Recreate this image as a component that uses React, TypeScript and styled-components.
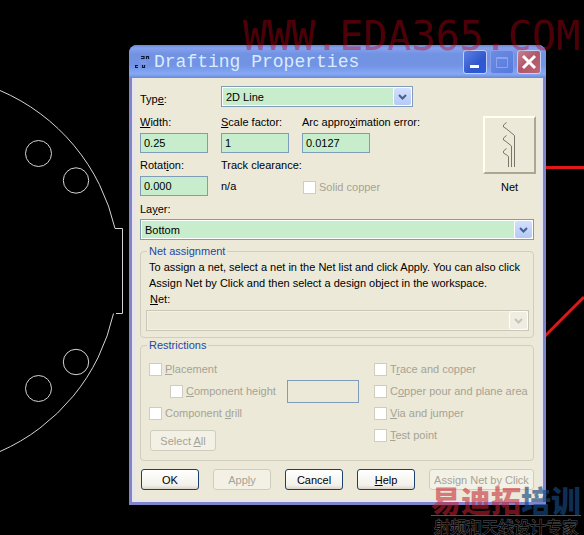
import React, { useId } from "react";
import styled, { createGlobalStyle, css } from "styled-components";

const GlobalStyle = createGlobalStyle`
  *, *::before, *::after { box-sizing: border-box; }
  body { margin: 0; background: #000; }
  body, button, input, select {
    font-family: "Liberation Sans", Arial, sans-serif;
    font-size: 11px;
    line-height: 16px;
    color: #000;
  }
`;

const INK = "#a5a395";
const FIELD = "#c7edcc";
const EDGE = "#7f9db9";

const Workspace = styled.main`
  position: relative;
  min-height: 100vh;
  padding: 45px 38px 31px 129px;
  background: #000;
  overflow: hidden;
`;

const Board = styled.svg`
  position: absolute;
  top: 0;
  left: 0;
`;

const Traces = styled.svg`
  position: absolute;
  top: 0;
  right: 0;
`;

const Dialog = styled.section`
  position: relative;
  border: 3px solid #8085cb;
  border-top: 0;
  border-radius: 8px 8px 0 0;
  background: #8085cb;
`;

const TitleBar = styled.header`
  display: flex;
  align-items: center;
  gap: 3px;
  height: 33px;
  margin: 0 -3px;
  padding: 1px 5px 0 6px;
  border-radius: 8px 8px 0 0;
  background: linear-gradient(#6c84d8 0, #86a2ef 3px, #7292e2 9px, #7292e4 20px, #84a9f5 29px, #6b87d6 33px);
`;

const Title = styled.h1`
  flex: 1;
  margin: 0;
  font: 400 18px/32px "Liberation Mono", monospace;
  color: #d8ecff;
  white-space: nowrap;
`;

const CaptionButton = styled.button<{ $tone: "blue" | "dim" | "red" }>`
  display: grid;
  place-items: center;
  width: 24px;
  height: 24px;
  padding: 0;
  border: 1px solid ${(p) => (p.$tone === "dim" ? "#86a0ea" : "#c3cff6")};
  border-radius: 3px;
  background: ${(p) =>
    ({
      blue: "linear-gradient(135deg, #5c80e4, #2f58cc 60%, #2b58dc)",
      dim: "linear-gradient(135deg, #6d8be2, #567adc)",
      red: "linear-gradient(135deg, #c6808f, #b0566a 50%, #bd6677)",
    })[p.$tone]};
`;

const Body = styled.form`
  border: 3px solid #e7e5ea;
  border-top: 0;
  padding: 8px 4px 9px 5px;
  background: #ece9d8;
`;

const Top = styled.div`
  display: flex;
  justify-content: space-between;
`;

const Fields = styled.div`
  display: grid;
  grid-template-columns: repeat(3, 68px);
  column-gap: 13px;
  row-gap: 4px;
`;

const TypeRow = styled.div`
  grid-column: 1 / -1;
  display: grid;
  grid-template-columns: 68px 192px;
  column-gap: 13px;
  align-items: end;
  margin-bottom: 3px;
`;

const Field = styled.div`
  display: flex;
  flex-direction: column;
  gap: 3px;
`;

const Label = styled.label`
  white-space: nowrap;
`;

const TextBox = styled.input`
  width: 100%;
  height: 20px;
  padding: 0 4px 0 3px;
  border: 1px solid ${EDGE};
  border-radius: 0;
  background: ${FIELD};
  &:disabled { background: #ece9d8; }
`;

const HeightBox = styled(TextBox)`
  width: 72px;
  height: 23px;
  margin-left: 11px;
`;

const Output = styled.output`
  line-height: 20px;
`;

const SelectFrame = styled.div`
  position: relative;
  display: flex;
`;

const SelectBox = styled.select`
  appearance: none;
  width: 100%;
  height: 21px;
  padding: 0 20px 0 4px;
  border: 1px solid ${EDGE};
  border-radius: 0;
  outline: 0;
  background: ${FIELD};
  box-shadow: inset 0 0 0 1px #fff;
  opacity: 1;
  &:disabled {
    border-color: #c9c7ba;
    background: #ece9d8;
    box-shadow: inset 0 0 0 1px #f3f1e6;
  }
`;

const Arrow = styled.span<{ $off?: boolean }>`
  position: absolute;
  top: 1px;
  right: 1px;
  display: grid;
  place-items: center;
  width: 19px;
  height: 19px;
  border: 1px solid #fff;
  border-radius: 3px;
  background: ${(p) => (p.$off ? "#efede2" : "linear-gradient(#d3e0fd, #b4c9f6)")};
  color: ${(p) => (p.$off ? "#c6c4b8" : "#42608f")};
  pointer-events: none;
`;

const NetTool = styled.div`
  display: flex;
  flex-direction: column;
  align-items: center;
  gap: 5px;
  padding-top: 30px;
`;

const NetButton = styled.button`
  display: grid;
  place-items: center;
  width: 53px;
  height: 58px;
  padding: 0;
  border: 2px solid;
  border-color: #fffff4 #aaa794 #aaa794 #fffff4;
  background: #ece9d8;
`;

const Main = styled.div`
  padding-right: 2px;
`;

const LayerField = styled(Field)`
  gap: 2px;
  margin-top: 5px;
`;

const Group = styled.fieldset<{ $first?: boolean }>`
  min-width: 0;
  margin: ${(p) => (p.$first ? "4px" : "0")} 0 0;
  padding: ${(p) => (p.$first ? "1px 4px 6px 5px" : "6px 4px 9px 8px")};
  border: 1px solid #d0cebf;
  border-radius: 4px;
`;

const Legend = styled.legend<{ $inset?: boolean }>`
  margin-left: ${(p) => (p.$inset ? "1px" : "-2px")};
  padding: 0 2px;
  line-height: 14px;
  color: #1d47a5;
`;

const Note = styled.p`
  margin: 0 3px;
`;

const NetLabel = styled(Label)`
  display: block;
  margin: 0 4px 3px;
`;

const Restrictions = styled.div`
  display: grid;
  grid-template-columns: 225px 1fr;
`;

const Stack = styled.div`
  display: flex;
  flex-direction: column;
  align-items: flex-start;
`;

const CheckRow = styled.div<{ $indent?: boolean }>`
  display: flex;
  align-items: center;
  height: 22px;
  padding-left: ${(p) => (p.$indent ? "21px" : "0")};
`;

const CheckLabel = styled.label`
  display: flex;
  align-items: center;
  gap: 3px;
  color: ${INK};
  white-space: nowrap;
`;

const Check = styled.input`
  appearance: none;
  flex: none;
  width: 13px;
  height: 13px;
  margin: 0;
  border: 1px solid #cfcdbf;
  background: #fff;
`;

const SolidCell = styled.div`
  display: flex;
  align-items: flex-end;
  padding-left: 1px;
  padding-bottom: 1px;
`;

const buttonOff = css`
  border-color: #cfcdbe;
  background: #f3f1e6;
  color: ${INK};
`;

const PushButton = styled.button<{ $wide?: boolean }>`
  flex: ${(p) => (p.$wide ? "1" : "0 0 58px")};
  height: 21px;
  padding: 0;
  border: 1px solid #1c3f6e;
  border-radius: 3px;
  background: linear-gradient(#fff, #f2f1ea 80%, #d9d5c9);
  white-space: nowrap;
  &:disabled { ${buttonOff} }
`;

const SelectAll = styled(PushButton)`
  flex: none;
  width: 66px;
  margin: 6px 0 0 1px;
`;

const Actions = styled.footer`
  display: flex;
  gap: 14px;
  margin-top: 8px;
  padding-left: 1px;
`;

const SiteMark = styled.div`
  position: absolute;
  top: 12px;
  right: 4px;
  font: 40px/48px "DejaVu Sans Mono", monospace;
  color: rgba(190, 0, 22, 0.42);
  white-space: nowrap;
  pointer-events: none;
`;

const Brand = styled.div`
  position: absolute;
  right: 3px;
  bottom: 0;
  display: flex;
  flex-direction: column;
  align-items: center;
  font-family: "Noto Sans CJK SC", sans-serif;
  pointer-events: none;
`;

const BrandName = styled.div`
  font-size: 30px;
  font-weight: 900;
  line-height: 32px;
  color: rgba(196, 34, 48, 0.58);
  border-bottom: 1px solid #55555a;
`;

const BrandBlue = styled.span`
  color: rgba(22, 72, 128, 0.66);
`;

const BrandLine = styled.div`
  font-size: 16px;
  line-height: 20px;
  color: #000;
  -webkit-text-stroke: 1px #58585a;
  paint-order: stroke;
`;

/** Renders a caption in which the letter after "&" is the underlined access key. */
function Caption({ text }: { text: string }) {
  const at = text.indexOf("&");
  if (at < 0) return <span>{text}</span>;
  return (
    <span>
      {text.slice(0, at)}
      <u>{text[at + 1]}</u>
      {text.slice(at + 2)}
    </span>
  );
}

function LabeledText({ text, value }: { text: string; value: string }) {
  const id = useId();
  return (
    <Field>
      <Label htmlFor={id}><Caption text={text} /></Label>
      <TextBox id={id} defaultValue={value} />
    </Field>
  );
}

function Dropdown({ id, value, disabled }: { id: string; value: string; disabled?: boolean }) {
  return (
    <SelectFrame>
      <SelectBox id={id} disabled={disabled}>
        <option>{value}</option>
      </SelectBox>
      <Arrow $off={disabled}>
        <svg width="9" height="6" viewBox="0 0 9 6" fill="none" stroke="currentColor" strokeWidth="2">
          <path d="M1 1l3.500 3.500L8 1" />
        </svg>
      </Arrow>
    </SelectFrame>
  );
}

function CheckItem({ text }: { text: string }) {
  return (
    <CheckLabel>
      <Check type="checkbox" disabled />
      <Caption text={text} />
    </CheckLabel>
  );
}

export default function App() {
  return (
    <>
      <GlobalStyle />
      <Workspace>
        <Board width="129" height="535" fill="none" stroke="#d4d4d4">
          <path d="M0 90.500A197.500 197.500 0 0 1 115 228.500H122.500V313.500H116M113.500 313.500A197.500 197.500 0 0 1 0 451.500" />
          <circle cx="38.500" cy="153.500" r="13" />
          <circle cx="76" cy="180.500" r="12.700" />
          <circle cx="76" cy="362" r="12.700" />
          <circle cx="38.500" cy="388.500" r="13" />
        </Board>
        <Traces width="39" height="535" stroke="#e01818" strokeWidth="3">
          <path d="M0 167.500H39M0 336L39 297" />
        </Traces>

        <Dialog role="dialog" aria-labelledby="title">
          <TitleBar>
            <svg width="16" height="16" viewBox="0 0 16 16" fill="none" stroke="#10183c">
              <path d="M6 2.500h3v2H6M11.500 5V2.500h2V5M3 11.500H.500v2H3M7.500 11v2.500h2V11" strokeWidth="1.200" />
              <path d="M4 7.500h7M6 9.500h6" stroke="#58b0f4" />
            </svg>
            <Title id="title">Drafting Properties</Title>
            <CaptionButton $tone="blue" type="button" aria-label="Minimize">
              <svg width="18" height="18"><path d="M4 12h9v3H4z" fill="#fff" /></svg>
            </CaptionButton>
            <CaptionButton $tone="dim" type="button" aria-label="Maximize" disabled>
              <svg width="18" height="18" fill="none" stroke="#89a4f0">
                <path d="M3.500 4.500h11v10h-11zM3.500 5.500h11" />
              </svg>
            </CaptionButton>
            <CaptionButton $tone="red" type="button" aria-label="Close">
              <svg width="18" height="18" stroke="#fff" strokeWidth="3"><path d="M3 3l12 12M15 3L3 15" /></svg>
            </CaptionButton>
          </TitleBar>

          <Body onSubmit={(e) => e.preventDefault()}>
            <Top>
              <Fields>
                <TypeRow>
                  <Label htmlFor="type"><Caption text="Typ&e:" /></Label>
                  <Dropdown id="type" value="2D Line" />
                </TypeRow>
                <LabeledText text="&Width:" value="0.25" />
                <LabeledText text="&Scale factor:" value="1" />
                <LabeledText text="Arc appro&ximation error:" value="0.0127" />
                <LabeledText text="Rotat&ion:" value="0.000" />
                <Field>
                  <Label htmlFor="clearance">Track clearance:</Label>
                  <Output id="clearance">n/a</Output>
                </Field>
                <SolidCell><CheckItem text="Solid copper" /></SolidCell>
              </Fields>
              <NetTool>
                <NetButton id="net-tool" type="button" aria-labelledby="net-name">
                  <svg width="20" height="48" viewBox="0 0 20 48" fill="none" stroke="#77756c">
                    <path d="M6.500 1.500L3.500 4v2l2.500 1.500L14.500 14.500V46M6.500 14.500L3.500 17v2l2.500 1.500L11.500 25V46M6.500 27.500L3.500 30v2l2.500 1.500L8.500 35.500V46" />
                  </svg>
                </NetButton>
                <Label id="net-name" htmlFor="net-tool">Net</Label>
              </NetTool>
            </Top>

            <Main>
              <LayerField>
                <Label htmlFor="layer"><Caption text="La&yer:" /></Label>
                <Dropdown id="layer" value="Bottom" />
              </LayerField>

              <Group $first>
                <Legend $inset>Net assignment</Legend>
                <Note>
                  To assign a net, select a net in the Net list and click Apply. You can also click
                  Assign Net by Click and then select a design object in the workspace.
                </Note>
                <NetLabel htmlFor="net"><Caption text="&Net:" /></NetLabel>
                <Dropdown id="net" value="" disabled />
              </Group>

              <Group>
                <Legend>Restrictions</Legend>
                <Restrictions>
                  <Stack>
                    <CheckRow><CheckItem text="&Placement" /></CheckRow>
                    <CheckRow $indent>
                      <CheckItem text="&Component height" />
                      <HeightBox disabled aria-label="Component height value" />
                    </CheckRow>
                    <CheckRow><CheckItem text="Component &drill" /></CheckRow>
                    <SelectAll type="button" disabled><Caption text="Select &All" /></SelectAll>
                  </Stack>
                  <Stack>
                    <CheckRow><CheckItem text="T&race and copper" /></CheckRow>
                    <CheckRow><CheckItem text="C&opper pour and plane area" /></CheckRow>
                    <CheckRow><CheckItem text="&Via and jumper" /></CheckRow>
                    <CheckRow><CheckItem text="&Test point" /></CheckRow>
                  </Stack>
                </Restrictions>
              </Group>

              <Actions>
                <PushButton type="submit">OK</PushButton>
                <PushButton type="button" disabled><Caption text="App&ly" /></PushButton>
                <PushButton type="button">Cancel</PushButton>
                <PushButton type="button"><Caption text="&Help" /></PushButton>
                <PushButton type="button" $wide disabled>Assign Net by Click</PushButton>
              </Actions>
            </Main>
          </Body>
        </Dialog>

        <SiteMark>WWW.EDA365.COM</SiteMark>
        <Brand>
          <BrandName>易迪拓<BrandBlue>培训</BrandBlue></BrandName>
          <BrandLine>射频和天线设计专家</BrandLine>
        </Brand>
      </Workspace>
    </>
  );
}
